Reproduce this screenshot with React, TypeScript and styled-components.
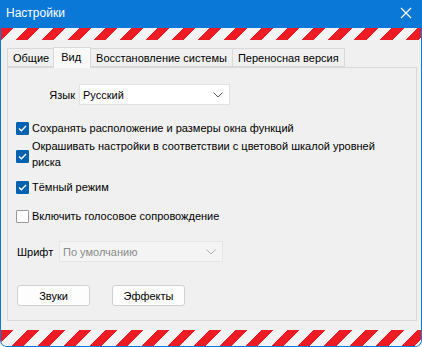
import styled, { createGlobalStyle } from "styled-components";

const GlobalStyle = createGlobalStyle`
  html, body {
    margin: 0;
    padding: 0;
    background: #ffffff;
  }
  * {
    box-sizing: border-box;
  }
`;

// окно целиком
const Window = styled.div`
  display: flex;
  flex-direction: column;
  width: 422px;
  height: 347px;
  background: #f0f0f0;
  border: 1px solid #0a78d7;
  border-top: none;
  border-radius: 0 0 7px 7px;
  overflow: hidden;
  font-family: "Liberation Sans", Arial, sans-serif;
  font-size: 11px;
  color: #000;
`;

const TitleBar = styled.div`
  display: flex;
  align-items: center;
  justify-content: space-between;
  height: 28px;
  margin: 0 -1px;
  padding: 0 10px 2px 6px;
  background: #0a78d7;
  color: #fff;
  font-size: 12px;
`;

const CloseIcon = () => (
  <svg width="12" height="12" viewBox="0 0 12 12">
    <path d="M1 1 L11 11 M11 1 L1 11" stroke="#fff" strokeWidth="1.2" />
  </svg>
);

// красно-белая полоса
const Stripes = styled.div<{ $h: number }>`
  flex: none;
  height: ${(p) => p.$h}px;
  background: repeating-linear-gradient(
    135deg,
    #ed1c24 0px,
    #ed1c24 9px,
    #f4f4f4 9px,
    #f4f4f4 18.4px
  );
`;

const Body = styled.div`
  flex: 1;
  display: flex;
  flex-direction: column;
  padding: 7px 4px 9px 6px;
`;

const TabStrip = styled.div`
  display: flex;
  align-items: flex-end;
  height: 20px;
`;

const Tab = styled.div<{ $active?: boolean }>`
  display: flex;
  align-items: center;
  height: ${(p) => (p.$active ? "21px" : "19px")};
  margin-bottom: ${(p) => (p.$active ? "-1px" : "0")};
  padding: ${(p) => (p.$active ? "0 9px 3px 7px" : "0 5px 0 5px")};
  border: 1px solid #d9d9d9;
  border-bottom: ${(p) => (p.$active ? "none" : "1px solid #d9d9d9")};
  margin-left: -1px;
  background: ${(p) => (p.$active ? "#f9f9f9" : "#f0f0f0")};
  position: relative;
  z-index: ${(p) => (p.$active ? 1 : 0)};
  white-space: nowrap;
  &:first-child {
    margin-left: 0;
    padding: 0 4px 0 5px;
  }
`;

const Panel = styled.div`
  flex: 1;
  display: flex;
  flex-direction: column;
  border: 1px solid #d9d9d9;
  padding: 16px 20px 0 8px;
`;

const FieldRow = styled.div<{ $top: number }>`
  display: flex;
  align-items: center;
  gap: 4px;
  margin-top: ${(p) => p.$top}px;
`;

const Label = styled.span<{ $w: number; $align: "left" | "right" }>`
  width: ${(p) => p.$w}px;
  padding-left: ${(p) => (p.$align === "left" ? "1px" : "0")};
  text-align: ${(p) => p.$align};
`;

const Select = styled.div<{ $w: number; $disabled?: boolean }>`
  display: flex;
  align-items: center;
  justify-content: space-between;
  width: ${(p) => p.$w}px;
  height: 21px;
  padding: 0 6px 0 3px;
  background: ${(p) => (p.$disabled ? "#f4f4f4" : "#fff")};
  border: 1px solid ${(p) => (p.$disabled ? "#e6e6e6" : "#e2e2e2")};
  color: ${(p) => (p.$disabled ? "#8a8a8a" : "#000")};
`;

const Chevron = ({ color }: { color: string }) => (
  <svg width="10" height="6" viewBox="0 0 10 6">
    <path d="M0.5 0.5 L5 5 L9.5 0.5" fill="none" stroke={color} strokeWidth="1" />
  </svg>
);

const CheckList = styled.div`
  display: flex;
  flex-direction: column;
  margin-top: 15px;
`;

const CheckRow = styled.label<{ $gap: number }>`
  display: flex;
  align-items: center;
  gap: 3px;
  margin-bottom: ${(p) => p.$gap}px;
  line-height: 16px;
`;

const Box = styled.span<{ $checked?: boolean; $shift: number }>`
  flex: none;
  width: 13px;
  height: 13px;
  margin-top: ${(p) => p.$shift}px;
  display: flex;
  align-items: center;
  justify-content: center;
  background: ${(p) => (p.$checked ? "#0063b1" : "#fff")};
  border: 1px solid ${(p) => (p.$checked ? "#0063b1" : "#9a9a9a")};
  border-radius: 1px;
`;

const CheckMark = () => (
  <svg width="9" height="7" viewBox="0 0 9 7">
    <path d="M1 3.5 L3.4 5.8 L8 1" fill="none" stroke="#fff" strokeWidth="1.3" />
  </svg>
);

const CheckText = styled.span`
  flex: 1;
`;

const ButtonRow = styled.div`
  display: flex;
  gap: 22px;
  margin-top: 23px;
  padding-left: 1px;
`;

const Button = styled.button`
  width: 73px;
  height: 21px;
  padding: 0;
  border: 1px solid #d0d0d0;
  border-radius: 3px;
  background: #fdfdfd;
  font-family: inherit;
  font-size: 11px;
  color: #000;
`;

const Check = ({
  checked,
  text,
  gap,
  shift = 0,
}: {
  checked?: boolean;
  text: string;
  gap: number;
  shift?: number;
}) => (
  <CheckRow $gap={gap}>
    <Box $checked={checked} $shift={shift}>
      {checked && <CheckMark />}
    </Box>
    <CheckText>{text}</CheckText>
  </CheckRow>
);

export default function App() {
  return (
    <>
      <GlobalStyle />
      <Window>
        <TitleBar>
          <span>Настройки</span>
          <CloseIcon />
        </TitleBar>
        <Stripes $h={12} />
        <Body>
          <TabStrip>
            <Tab>Общие</Tab>
            <Tab $active>Вид</Tab>
            <Tab>Восстановление системы</Tab>
            <Tab>Переносная версия</Tab>
          </TabStrip>
          <Panel>
            <FieldRow $top={0}>
              <Label $w={59} $align="right">Язык</Label>
              <Select $w={151}>
                <span>Русский</span>
                <Chevron color="#555" />
              </Select>
            </FieldRow>
            <CheckList>
              <Check checked gap={2} text="Сохранять расположение и размеры окна функций" />
              <Check
                checked
                gap={9}
                shift={5}
                text="Окрашивать настройки в соответствии с цветовой шкалой уровней риска"
              />
              <Check checked gap={13} text="Тёмный режим" />
              <Check gap={0} text="Включить голосовое сопровождение" />
            </CheckList>
            <FieldRow $top={17}>
              <Label $w={39} $align="left">Шрифт</Label>
              <Select $w={164} $disabled>
                <span>По умолчанию</span>
                <Chevron color="#b0b0b0" />
              </Select>
            </FieldRow>
            <ButtonRow>
              <Button>Звуки</Button>
              <Button>Эффекты</Button>
            </ButtonRow>
          </Panel>
        </Body>
        <Stripes $h={16} />
      </Window>
    </>
  );
}
